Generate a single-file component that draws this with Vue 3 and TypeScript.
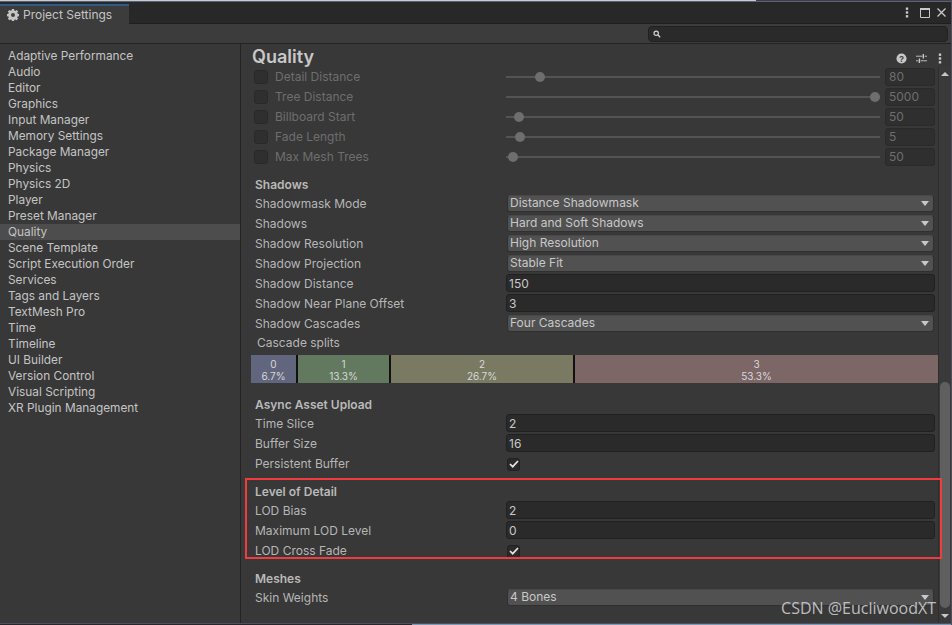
<script setup lang="ts">
interface SliderRow { label: string; pos: number; value: string }
type Row =
  | { kind: 'select' | 'input'; label: string; value: string }
  | { kind: 'check'; label: string }

const categories = [
  'Adaptive Performance', 'Audio', 'Editor', 'Graphics', 'Input Manager', 'Memory Settings',
  'Package Manager', 'Physics', 'Physics 2D', 'Player', 'Preset Manager', 'Quality',
  'Scene Template', 'Script Execution Order', 'Services', 'Tags and Layers', 'TextMesh Pro',
  'Time', 'Timeline', 'UI Builder', 'Version Control', 'Visual Scripting', 'XR Plugin Management'
]

const sliders: SliderRow[] = [
  { label: 'Detail Distance', pos: 34, value: '80' },
  { label: 'Tree Distance', pos: 369, value: '5000' },
  { label: 'Billboard Start', pos: 13, value: '50' },
  { label: 'Fade Length', pos: 14, value: '5' },
  { label: 'Max Mesh Trees', pos: 7, value: '50' }
]

const shadows: Row[] = [
  { kind: 'select', label: 'Shadowmask Mode', value: 'Distance Shadowmask' },
  { kind: 'select', label: 'Shadows', value: 'Hard and Soft Shadows' },
  { kind: 'select', label: 'Shadow Resolution', value: 'High Resolution' },
  { kind: 'select', label: 'Shadow Projection', value: 'Stable Fit' },
  { kind: 'input', label: 'Shadow Distance', value: '150' },
  { kind: 'input', label: 'Shadow Near Plane Offset', value: '3' },
  { kind: 'select', label: 'Shadow Cascades', value: 'Four Cascades' }
]

const cascades = [
  { id: '0', pct: '6.7%', width: 45, color: '#62657e' },
  { id: '1', pct: '13.3%', width: 91, color: '#62795f' },
  { id: '2', pct: '26.7%', width: 182, color: '#7a7a62' },
  { id: '3', pct: '53.3%', width: 363, color: '#7c6666' }
]

const asyncRows: Row[] = [
  { kind: 'input', label: 'Time Slice', value: '2' },
  { kind: 'input', label: 'Buffer Size', value: '16' },
  { kind: 'check', label: 'Persistent Buffer' }
]

const lodRows: Row[] = [
  { kind: 'input', label: 'LOD Bias', value: '2' },
  { kind: 'input', label: 'Maximum LOD Level', value: '0' },
  { kind: 'check', label: 'LOD Cross Fade' }
]

const sections: { title: string; rows: Row[]; boxed: boolean }[] = [
  { title: 'Async Asset Upload', rows: asyncRows, boxed: false },
  { title: 'Level of Detail', rows: lodRows, boxed: true },
  { title: 'Meshes', rows: [{ kind: 'select', label: 'Skin Weights', value: '4 Bones' }], boxed: false }
]
</script>

<template>
  <div class="window">
    <div class="top-strip"></div>
    <div class="tabbar">
      <div class="tab">
        <svg class="gear" viewBox="0 0 16 16" width="12" height="12">
          <path fill="#c4c4c4" fill-rule="evenodd" d="M6.600 0h2.800l.4 2 1.300.5 1.700-1.100 2 2-1.100 1.700.5 1.300 2 .4v2.800l-2 .4-.5 1.300 1.100 1.700-2 2-1.700-1.100-1.300.5-.4 2H6.600l-.4-2-1.300-.5-1.700 1.100-2-2 1.100-1.700-.5-1.300-2-.4V6.600l2-.4.5-1.300-1.100-1.700 2-2 1.700 1.100 1.300-.5zM8 5.400a2.600 2.600 0 1 0 0 5.200 2.600 2.600 0 0 0 0-5.200z" />
        </svg>
        <span>Project Settings</span>
      </div>
      <div class="win-icons">
        <svg class="menu-dots" viewBox="0 0 4 11" width="4" height="11"><g fill="#c8c8c8"><rect x=".8" y=".5" width="2.400" height="2.400" /><rect x=".8" y="4.300" width="2.400" height="2.400" /><rect x=".8" y="8.100" width="2.400" height="2.400" /></g></svg>
        <svg viewBox="0 0 10 10" width="10" height="10"><path fill="none" stroke="#c8c8c8" d="M.5 1.500h9v8h-9z" /><path stroke="#c8c8c8" stroke-width="2" d="M0 1h10" /></svg>
        <svg viewBox="0 0 9 9" width="9" height="9"><path stroke="#c8c8c8" stroke-width="1.300" d="M.5.500l8 8M8.500.500l-8 8" /></svg>
      </div>
    </div>
    <div class="toolbar">
      <div class="search">
        <svg viewBox="0 0 10 10" width="8" height="8"><circle cx="4" cy="4" r="2.700" fill="none" stroke="#d0d0d0" stroke-width="1.500" /><path stroke="#d0d0d0" stroke-width="1.600" d="M6 6l3 3" /></svg>
      </div>
    </div>
    <div class="main">
      <nav class="sidebar">
        <div v-for="c in categories" :key="c" class="cat" :class="{ active: c === 'Quality' }">{{ c }}</div>
      </nav>
      <section class="pane">
        <header class="title-row">
          <h1>Quality</h1>
          <div class="title-icons">
            <svg viewBox="0 0 12 12" width="11" height="11"><circle cx="6" cy="6" r="5.500" fill="#c8c8c8" /><text x="6" y="9.300" class="q">?</text></svg>
            <svg viewBox="0 0 12 12" width="11" height="11"><path stroke="#c8c8c8" d="M0 3.500h7M9.500 3.500H12M0 8.500h2.500M5 8.500h7" /><path stroke="#c8c8c8" stroke-width="1.500" d="M8 1v5M3.700 6v5" /></svg>
            <svg class="pane-dots" viewBox="0 0 4 11" width="4" height="11"><g fill="#c8c8c8"><rect x=".8" y=".5" width="2.400" height="2.400" /><rect x=".8" y="4.300" width="2.400" height="2.400" /><rect x=".8" y="8.100" width="2.400" height="2.400" /></g></svg>
          </div>
        </header>
        <div class="body">
          <div class="content">
            <div v-for="s in sliders" :key="s.label" class="row disabled">
              <div class="label"><span class="dim-box"></span><span>{{ s.label }}</span></div>
              <div class="track">
                <span class="thumb" :style="{ left: s.pos + 'px' }"></span>
              </div>
              <div class="dim-field">{{ s.value }}</div>
            </div>

            <h2 class="first">Shadows</h2>
            <div v-for="r in shadows" :key="r.label" class="row">
              <div class="label">{{ r.label }}</div>
              <div v-if="r.kind === 'select'" class="select">{{ r.value }}<i class="caret"></i></div>
              <div v-else-if="r.kind === 'input'" class="input">{{ r.value }}</div>
            </div>

            <div class="splits-label">Cascade splits</div>
            <div class="splits">
              <div v-for="c in cascades" :key="c.id" class="split" :style="{ width: c.width + 'px', background: c.color }">
                <span>{{ c.id }}</span><span>{{ c.pct }}</span>
              </div>
            </div>

            <div v-for="sec in sections" :key="sec.title" class="group" :class="{ boxed: sec.boxed }">
              <h2>{{ sec.title }}</h2>
              <div v-for="r in sec.rows" :key="r.label" class="row">
                <div class="label">{{ r.label }}</div>
                <div v-if="r.kind === 'select'" class="select">{{ r.value }}<i class="caret"></i></div>
                <div v-else-if="r.kind === 'input'" class="input">{{ r.value }}</div>
                <div v-else class="check">
                  <svg viewBox="0 0 10 8" width="10" height="8"><path fill="none" stroke="#e4e4e4" stroke-width="1.700" d="M1 4l2.700 2.700L9 1" /></svg>
                </div>
              </div>
            </div>
          </div>
          <div class="scrollbar">
            <i class="arrow up"></i>
            <div class="scroll-track"><div class="scroll-thumb"></div></div>
            <i class="arrow down"></i>
          </div>
        </div>
        <div class="watermark">CSDN @EucliwoodXT</div>
      </section>
    </div>
    <div class="bottom-strip"></div>
  </div>
</template>

<style>
html, body { margin: 0; background: #282828; }
</style>

<style scoped>
.window {
  width: 952px; height: 625px; overflow: hidden; display: flex; flex-direction: column;
  background: #383838; color: #c4c4c4; box-sizing: border-box;
  font-family: Inter, "Liberation Sans", sans-serif; font-size: 12px; line-height: 16px;
  border-right: 1px solid #4b4f5e;
}
.top-strip { height: 1px; flex: none; background: linear-gradient(90deg, #c3ccd2 0, #c3ccd2 756px, #3d3f4c 756px); }
.tabbar { height: 19px; flex: none; background: #282828; border-top: 1px solid #5c6070; border-bottom: 1px solid #1f1f1f; display: flex; justify-content: space-between; padding-top: 2px; }
.tab { width: 129px; box-sizing: border-box; background: #3c3c3c; border-top: 2px solid #2c5d87; display: flex; align-items: center; gap: 4px; padding-left: 7px; margin-bottom: -1px; }
.gear { flex: none; }
.win-icons { display: flex; align-items: center; gap: 7px; padding: 0 5px 2px 0; }
.menu-dots { margin-right: 4px; }
.toolbar { height: 19px; flex: none; background: #3c3c3c; border-bottom: 1px solid #232323; display: flex; justify-content: flex-end; align-items: center; padding-right: 3px; }
.search { width: 300px; height: 16px; box-sizing: border-box; background: #2a2a2a; border: 1px solid #212121; border-radius: 4px; display: flex; align-items: center; padding-left: 4px; }
.main { flex: 1; min-height: 0; display: flex; }
.sidebar { width: 241px; flex: none; box-sizing: border-box; padding-top: 4px; border-right: 1px solid #232323; font-size: 11.850px; }
.cat { height: 16px; line-height: 16px; white-space: nowrap; padding-left: 8px; }
.cat.active { background: #4d4d4d; }
.pane { flex: 1; min-width: 0; position: relative; display: flex; flex-direction: column; overflow: hidden; }
.title-row { height: 21px; padding: 2px 9px 0 11px; display: flex; align-items: center; justify-content: space-between; flex: none; }
h1 { margin: 0; font-size: 18px; font-weight: 600; color: #c8c8c8; line-height: 21px; }
.title-icons { display: flex; gap: 9px; align-items: center; margin-top: 3px; }
.pane-dots { margin-left: 2px; }
.q { font: bold 9px "Liberation Sans", sans-serif; fill: #383838; text-anchor: middle; }
.body { flex: 1; min-height: 0; display: flex; }
.content { flex: 1; min-width: 0; padding: 0 3px 0 14px; }
.row { height: 20px; display: flex; align-items: center; }
.label { width: 251px; flex: none; white-space: nowrap; color: #b6b6b6; display: flex; align-items: center; }
.disabled .label { color: #6e6e6e; }
.dim-box { width: 14px; height: 14px; box-sizing: border-box; background: #2f2f2f; border: 1px solid #292929; border-radius: 3px; margin-right: 7px; margin-left: -1px; flex: none; }
.track { position: relative; width: 374px; height: 2px; background: #545454; flex: none; margin-right: 5px; }
.thumb { position: absolute; top: -4px; width: 10px; height: 10px; border-radius: 50%; background: #6e6e6e; margin-left: -5px; }
.dim-field { width: 50px; height: 18px; flex: none; box-sizing: border-box; background: #2f2f2f; border: 1px solid #2a2a2a; border-radius: 3px; color: #6e6e6e; padding-left: 3px; line-height: 16px; }
h2 { margin: 0; font-size: 12px; font-weight: 600; color: #b9b9b9; line-height: 18px; height: 18px; }
h2.first { margin-top: 9px; }
.select { position: relative; flex: none; width: 427px; height: 17px; margin: 0 0 1px 1px; box-sizing: border-box; background: #515151; border: 1px solid #303030; border-top-color: #474747; border-radius: 3px; padding-left: 2px; line-height: 13px; color: #c8c8c8; }
.caret { position: absolute; right: 4px; top: 5px; border: 4px solid transparent; border-top: 5px solid #c8c8c8; border-bottom: 0; }
.input { flex: none; width: 429px; height: 18px; margin-bottom: 2px; box-sizing: border-box; background: #2a2a2a; border: 1px solid #212121; border-radius: 3px; padding-left: 2px; line-height: 17px; color: #c8c8c8; }
.check { width: 13px; height: 13px; flex: none; box-sizing: border-box; background: #2a2a2a; border: 1px solid #212121; border-radius: 3px; display: flex; align-items: center; justify-content: center; margin-left: 1px; }
.splits-label { height: 18px; line-height: 18px; margin-left: 2px; color: #b6b6b6; }
.splits { display: flex; gap: 2px; height: 28px; margin: 3px 0 0 -4px; width: 687px; background: #111; }
.split { flex: none; height: 28px; display: flex; flex-direction: column; align-items: center; font-size: 10px; line-height: 12px; padding-top: 3px; box-sizing: border-box; color: #d8d8d8; }
.group { margin-top: 13px; }
.group + .group { margin-top: 9px; }
.boxed { position: relative; z-index: 1; }
.boxed::before { content: ""; position: absolute; left: -10px; right: -7px; top: -5px; bottom: 2px; border: 2px solid #f03c3c; pointer-events: none; }
.scrollbar { width: 13px; flex: none; background: #3a3a3a; border-left: 1px solid #2e2e2e; display: flex; flex-direction: column; align-items: center; position: relative; box-sizing: border-box; padding: 5px 0; }
.arrow { border-left: 4px solid transparent; border-right: 4px solid transparent; flex: none; }
.arrow.up { border-bottom: 4px solid #c8c8c8; }
.arrow.down { border-top: 4px solid #c8c8c8; }
.scroll-track { flex: 1; width: 100%; position: relative; }
.scroll-thumb { position: absolute; left: 1px; right: 1px; top: 306px; bottom: 6px; background: #5f5f5f; border-radius: 5px; }
.watermark { position: absolute; z-index: 2; right: 15px; bottom: 5px; font-size: 16px; line-height: 20px; color: #d4d4d4; white-space: nowrap; font-family: "Open Sans", sans-serif; opacity: .85; }
.bottom-strip { height: 2px; flex: none; box-sizing: border-box; border-top: 1px solid #4b4f5e; background: linear-gradient(90deg, #26262c 0, #26262c 412px, #7d99b8 412px, #7d99b8 100%); }
</style>
